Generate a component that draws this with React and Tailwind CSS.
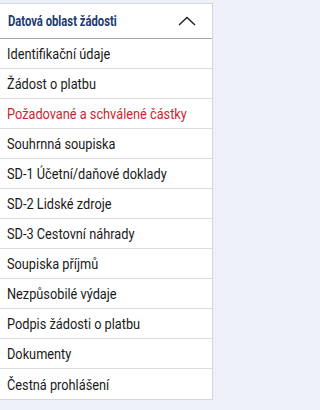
const POLOZKY = [
  'Identifikační údaje',
  'Žádost o platbu',
  'Požadované a schválené částky',
  'Souhrnná soupiska',
  'SD-1 Účetní/daňové doklady',
  'SD-2 Lidské zdroje',
  'SD-3 Cestovní náhrady',
  'Soupiska příjmů',
  'Nezpůsobilé výdaje',
  'Podpis žádosti o platbu',
  'Dokumenty',
  'Čestná prohlášení',
]

const AKTIVNI = 'Požadované a schválené částky'

function App() {
  return (
    <div className="min-h-[410px] w-full bg-[#eef0f9] pt-[3px] font-['Roboto',sans-serif]">
      <div className="w-[213px] border-t border-r border-b border-[#d4d6de] bg-white">
        {/* hlavicka */}
        <div className="flex h-[35px] items-center justify-between border-b border-[#a8a8a8] pl-[8px] pr-[16px]">
          <span className="inline-block origin-left scale-x-[0.75] text-[15px] font-bold whitespace-nowrap text-[#213a70]">
            Datová oblast žádosti
          </span>
          <svg width="18" height="10" viewBox="0 0 18 10" fill="none" stroke="#1a1a1a" strokeWidth="1.3">
            <path d="M1 9 L9 1.5 L17 9" />
          </svg>
        </div>
        {POLOZKY.map((p, i) => (
          <div
            key={p}
            className={
              'flex h-[30px] items-center pl-[7px] pt-[2px] text-[15px] ' +
              (i < POLOZKY.length - 1 ? 'border-b border-[#dcdcdc] ' : '') +
              (p === AKTIVNI ? 'text-[#cc1f30]' : 'text-[#1a1a1a]')
            }
          >
            <span className="inline-block origin-left scale-x-[0.85] whitespace-nowrap">{p}</span>
          </div>
        ))}
      </div>
    </div>
  )
}

export default App
